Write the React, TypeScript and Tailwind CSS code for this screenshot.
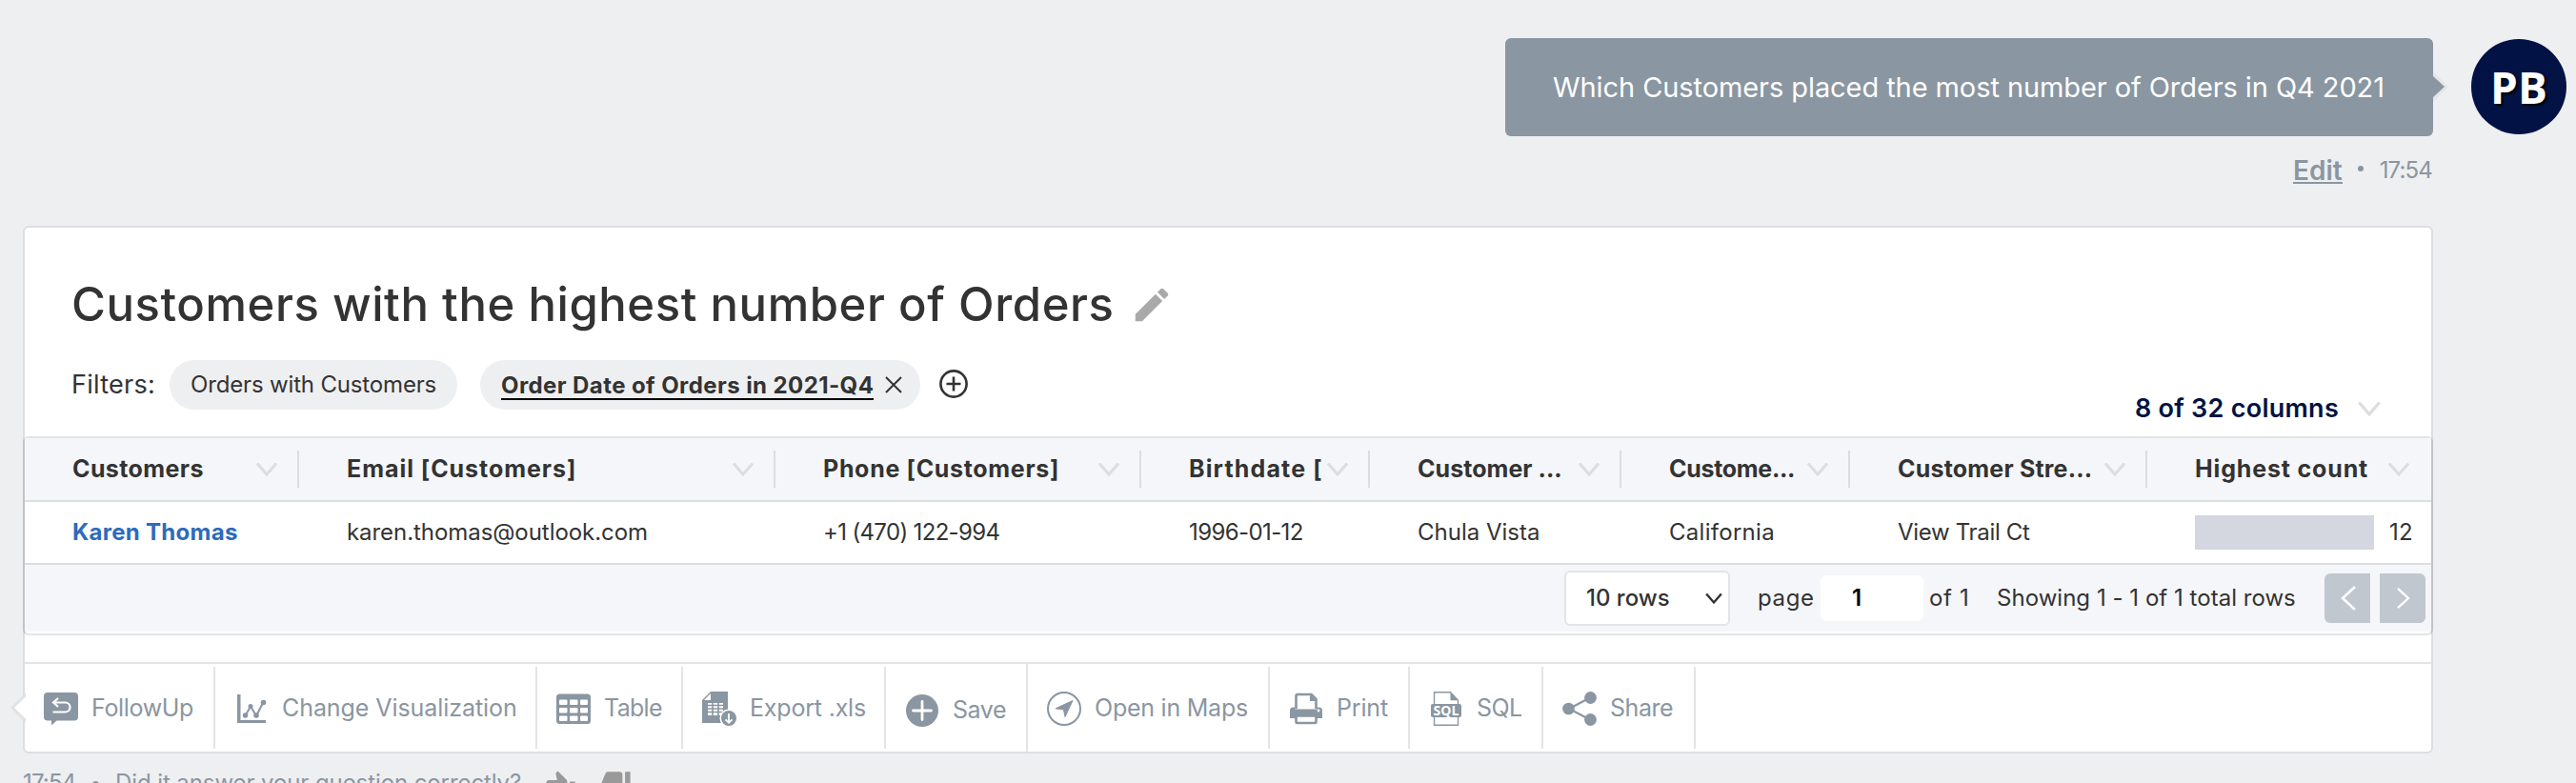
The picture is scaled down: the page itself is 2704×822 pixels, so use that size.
import React from 'react'
import { MdEdit, MdThumbDown, MdThumbUp } from 'react-icons/md'

type Column = {
    label: string;
    value: string;
    width: string;
    tracking: string;
    valueTracking: string;
};

const columns: Column[] = [
    { label: 'Customers', value: 'Karen Thomas', width: 'w-[288px]', tracking: 'tracking-[0.4px]', valueTracking: 'tracking-[0.29px]' },
    { label: 'Email [Customers]', value: 'karen.thomas@outlook.com', width: 'w-[500px]', tracking: 'tracking-[0.96px]', valueTracking: 'tracking-[-0.06px]' },
    { label: 'Phone [Customers]', value: '+1 (470) 122-994', width: 'w-[384px]', tracking: 'tracking-[0.68px]', valueTracking: 'tracking-[-0.66px]' },
    { label: 'Birthdate [', value: '1996-01-12', width: 'w-[240px]', tracking: 'tracking-[1.15px]', valueTracking: 'tracking-[-0.6px]' },
    { label: 'Customer ...', value: 'Chula Vista', width: 'w-[264px]', tracking: 'tracking-[0.05px]', valueTracking: 'tracking-[0px]' },
    { label: 'Custome...', value: 'California', width: 'w-[240px]', tracking: 'tracking-[-0.3px]', valueTracking: 'tracking-[0.28px]' },
    { label: 'Customer Stre...', value: 'View Trail Ct', width: 'w-[312px]', tracking: 'tracking-[0.2px]', valueTracking: 'tracking-[-0.32px]' },
    { label: 'Highest count', value: '12', width: 'w-[298px]', tracking: 'tracking-[0.84px]', valueTracking: 'tracking-[0.24px]' },
]

const Chevron = ({ className }: { className: string }) => (
    <svg viewBox="0 0 22 14" fill="none" stroke="currentColor" className={className}>
        <path d="M1 0.5 L11 12 L21 0.5" strokeWidth="3" />
    </svg>
)

const FollowUpIcon = () => (
    <svg viewBox="0 0 36 36" className="size-9">
        <path d="M4 1h28a4 4 0 0 1 4 4v21.500a4 4 0 0 1-4 4H13.500L8 35.500v-5H4a4 4 0 0 1-4-4V5a4 4 0 0 1 4-4z" fill="currentColor" />
        <path d="M15 7l-5 4.500 5 4.500M10.500 11.500H22.500a5 5 0 0 1 0 10H9.500" fill="none" stroke="white" strokeWidth="2.200" />
    </svg>
)

const ChartIcon = () => (
    <svg viewBox="0 0 36 36" className="size-9" fill="currentColor">
        <path d="M3 3h3.500v27H33v3H3z" />
        <path d="M11.500 25.500L17 15.500l6 10L30.500 11" fill="none" stroke="currentColor" strokeWidth="2" />
        <circle cx="11.500" cy="25" r="2.800" />
        <circle cx="17" cy="15.500" r="2.500" />
        <circle cx="23" cy="25" r="2.800" />
        <circle cx="30.500" cy="11.500" r="2.800" />
    </svg>
)

const TableIcon = () => (
    <svg viewBox="0 0 36 36" className="size-9">
        <rect x="0" y="2.500" width="36" height="31.500" rx="3.500" fill="currentColor" />
        <g fill="white">
            <rect x="3" y="8.500" width="8.500" height="5.500" rx="1" />
            <rect x="14" y="8.500" width="8.500" height="5.500" rx="1" />
            <rect x="25" y="8.500" width="8" height="5.500" rx="1" />
            <rect x="3" y="17" width="8.500" height="5.500" rx="1" />
            <rect x="14" y="17" width="8.500" height="5.500" rx="1" />
            <rect x="25" y="17" width="8" height="5.500" rx="1" />
            <rect x="3" y="25.500" width="8.500" height="5.500" rx="1" />
            <rect x="14" y="25.500" width="8.500" height="5.500" rx="1" />
            <rect x="25" y="25.500" width="8" height="5.500" rx="1" />
        </g>
    </svg>
)

const ExportIcon = () => (
    <svg viewBox="0 0 36 36" className="size-9">
        <path d="M9 0h18v33H0V9z" fill="currentColor" />
        <path d="M9 2v7H2z" fill="white" />
        <path d="M6 12h16v13H6z" fill="white" />
        <path d="M6 14.500h16M6 18h16M6 21.500h16M11 12v13M17 12v13" stroke="currentColor" strokeWidth="1.600" />
        <circle cx="28" cy="28" r="9.500" fill="white" />
        <circle cx="28" cy="28" r="8" fill="currentColor" />
        <path d="M28 23v9.500M24.500 29.300l3.500 3.500 3.500-3.500" fill="none" stroke="white" strokeWidth="1.800" />
    </svg>
)

const SaveIcon = () => (
    <svg viewBox="0 0 36 36" className="size-9">
        <circle cx="18" cy="18" r="17" fill="currentColor" />
        <path d="M18 8.500v19M8.500 18h19" stroke="white" strokeWidth="2.800" strokeLinecap="round" />
    </svg>
)

const MapsIcon = () => (
    <svg viewBox="0 0 36 36" className="size-9">
        <circle cx="18" cy="18" r="17" fill="none" stroke="currentColor" strokeWidth="2" />
        <path d="M27 9.500L19 26.500l-1.500-7.500L9 17.800z" fill="currentColor" stroke="currentColor" strokeLinejoin="round" />
    </svg>
)

const PrintIcon = () => (
    <svg viewBox="0 0 36 36" className="size-9">
        <path d="M7.500 18V4.500a1.500 1.500 0 0 1 1.500-1.500h14.500l5 5V18" fill="none" stroke="currentColor" strokeWidth="2.600" />
        <path d="M22 3v7h7z" fill="currentColor" />
        <path d="M1 20a3.500 3.500 0 0 1 3.500-3.500h2V18.500h23v-2h2A3.500 3.500 0 0 1 35 20v8H1z" fill="currentColor" />
        <circle cx="31" cy="20" r="1.400" fill="white" />
        <rect x="7.500" y="25.500" width="21" height="7.500" rx="1" fill="white" stroke="currentColor" strokeWidth="2.600" />
    </svg>
)

const SqlIcon = () => (
    <svg viewBox="0 0 36 36" className="size-9">
        <path d="M5.500 0.700h17l8 8.500v26h-25z" fill="white" stroke="currentColor" strokeWidth="1.400" />
        <path d="M22.500 0.700v8.500h8z" fill="currentColor" />
        <rect x="2" y="13" width="32" height="14" rx="2" fill="currentColor" />
        <text x="18" y="25" textAnchor="middle" fontSize="14" fontWeight="700" letterSpacing="0" fill="white" fontFamily="Open Sans, sans-serif">SQL</text>
    </svg>
)

const ShareIcon = () => (
    <svg viewBox="0 0 36 36" className="size-9" fill="currentColor">
        <path d="M29 6.500L7 18l22 11.500" fill="none" stroke="currentColor" strokeWidth="2.200" />
        <circle cx="29.500" cy="6.500" r="6.400" />
        <circle cx="6.500" cy="18" r="6.300" />
        <circle cx="29.500" cy="29.500" r="6.400" />
    </svg>
)

const actions = [
    { label: 'FollowUp', Icon: FollowUpIcon, style: 'w-[200px] my-[3px] pt-0.5 tracking-[-0.35px]' },
    { label: 'Change Visualization', Icon: ChartIcon, style: 'w-[338px] my-[3px] pt-0.5 tracking-[-0.07px]' },
    { label: 'Table', Icon: TableIcon, style: 'w-[153px] my-[3px] pt-0.5 tracking-[-0.68px]' },
    { label: 'Export .xls', Icon: ExportIcon, style: 'w-[213px] my-[3px] pt-0.5 tracking-[-0.19px]' },
    { label: 'Save', Icon: SaveIcon, style: 'w-[149px] pt-1.5 tracking-[-0.42px]' },
    { label: 'Open in Maps', Icon: MapsIcon, style: 'w-[254px] my-[3px] pt-0.5 tracking-[-0.24px]' },
    { label: 'Print', Icon: PrintIcon, style: 'w-[147px] my-[3px] pt-0.5 tracking-[-0.15px]' },
    { label: 'SQL', Icon: SqlIcon, style: 'w-[140px] my-[3px] pt-0.5 tracking-[-0.58px]' },
    { label: 'Share', Icon: ShareIcon, style: 'w-[160px] my-[3px] pt-0.5 tracking-[-0.46px]' },
]

function Question() {
    return (
        <div className="flex justify-end gap-10 pr-2.5">
            <div>
                <div className="relative flex h-[103px] w-[974px] items-center rounded-md bg-[#8a96a1] pl-[50px] text-[29px] tracking-[-0.08px] text-white">
                    Which Customers placed the most number of Orders in Q4 2021
                    <svg viewBox="0 0 17 32" className="absolute top-[35px] left-full h-8 w-[17px]">
                        <path d="M0 0L16 16L0 32z" fill="#e3e5e7" />
                        <path d="M0 5L12 16L0 27z" fill="#8a96a1" />
                    </svg>
                </div>
                <div className="mt-[22px] flex h-7 items-center justify-end text-[#8a96a1]">
                    <a className="h-7 border-b-2 border-[#8a96a1] text-[28px] leading-7 font-semibold">Edit</a>
                    <span className="mr-[17px] ml-4 mb-1 size-1.5 rounded-full bg-[#8a96a1]" />
                    <span className="mr-px text-2xl leading-7 tracking-[-0.85px]">17:54</span>
                </div>
            </div>
            <div className="mt-px flex size-[100px] items-center justify-center rounded-full bg-[#021244] font-['Open_Sans'] text-[46px] leading-none font-bold text-white [text-shadow:2px_2px_2px_#000]">
                PB
            </div>
        </div>
    )
}

function ResultHeader() {
    return (
        <div className="flex h-[219px] items-end justify-between pr-[53px] pl-[49px]">
            <div className="pb-7">
                <div className="flex h-[61px] items-center gap-[17px]">
                    <h1 className="text-[49px] font-medium tracking-[0.57px]">Customers with the highest number of Orders</h1>
                    <MdEdit className="size-[46px] text-[#a9a9a9]" />
                </div>
                <div className="mt-7 flex h-[52px] items-center text-2xl">
                    <span className="w-[103px] text-[27px] tracking-[0.27px]">Filters:</span>
                    <span className="flex h-full w-[302px] items-center rounded-full bg-[#eeeff1] pl-[22px] tracking-[-0.16px]">Orders with Customers</span>
                    <span className="ml-6 flex h-full w-[462px] items-center rounded-full bg-[#eeeff1] pl-[22px]">
                        <span className="h-[31px] w-[391px] border-b-2 border-black leading-8 font-bold tracking-[0.42px] whitespace-nowrap">Order Date of Orders in 2021-Q4</span>
                        <svg viewBox="0 0 18 18" className="ml-3 h-[18px] w-[18px]" stroke="currentColor" strokeWidth="2">
                            <path d="M1 1L17 17M17 1L1 17" />
                        </svg>
                    </span>
                    <svg viewBox="0 0 30 30" className="mb-0.5 ml-5 size-[30px]" fill="none" stroke="currentColor" strokeWidth="2.6">
                        <circle cx="15" cy="15" r="13.600" />
                        <path d="M15 7.500v15M7.500 15h15" />
                    </svg>
                </div>
            </div>
            <div className="mb-[9px] flex h-10 items-center gap-5">
                <span className="text-[27px] font-semibold tracking-[0.27px] text-[#021244]">8 of 32 columns</span>
                <Chevron className="h-[15px] w-6 text-[#dcdddf]" />
            </div>
        </div>
    )
}

function ResultTable() {
    return (
        <div className="-mx-0.5 h-[209px] rounded-md border-2 border-[#e3e4e6] border-x-[#c0c4c8]">
            <div className="flex h-[67px] items-center border-b-2 border-[#dbdfe1] bg-[#f5f6fa] text-[25px] font-bold">
                {columns.map((col, i) => (
                    <div key={col.label} className={`flex h-[39px] items-center pl-[50px] ${col.width}`}>
                        <span className={`w-0 grow whitespace-nowrap ${col.tracking}`}>{col.label}</span>
                        <Chevron className="mr-[21px] h-3.5 w-[22px] shrink-0 text-[#dcdddf]" />
                        <span className={`h-full w-0.5 ${i < columns.length - 1 ? 'bg-[#dcdddf]' : ''}`} />
                    </div>
                ))}
            </div>
            <div className="flex h-[66px] items-center border-b-2 border-[#dbdfe1] text-2xl">
                {columns.map((col, i) => (
                    <div key={col.label} className={`flex items-center pl-[50px] ${col.width}`}>
                        {i === columns.length - 1 && <span className="mr-4 h-9 w-[188px] bg-[#d4d7e0]" />}
                        <span className={`whitespace-nowrap ${col.valueTracking} ${i === 0 ? 'font-bold text-[#2d6bbb]' : ''}`}>{col.value}</span>
                    </div>
                ))}
            </div>
            <div className="flex h-[70px] items-center justify-end bg-[#f5f6fa] pr-1.5 text-2xl">
                <div className="flex h-[58px] w-[174px] items-center justify-between rounded-md border-2 border-[#e3e4e6] bg-white pr-[6px] pl-[21px] font-medium">
                    10 rows
                    <Chevron className="h-[11px] w-[18px]" />
                </div>
                <span className="ml-[29px] w-[66px] tracking-[0.63px]">page</span>
                <span className="flex h-12 w-[108px] items-center rounded-md bg-white pl-[33px] font-semibold text-black">1</span>
                <span className="ml-1.5 w-[71px] tracking-[0.66px]">of 1</span>
                <span className="w-[344px] tracking-[0.03px]">Showing 1 - 1 of 1 total rows</span>
                <button className="flex h-[52px] w-12 items-center justify-center rounded-l-md bg-[#c0c7cf] text-white">
                    <svg viewBox="0 0 16 26" className="ml-0.5 h-[26px] w-4" fill="none" stroke="currentColor" strokeWidth="2.5">
                        <path d="M15 1L2 13l13 12" />
                    </svg>
                </button>
                <button className="ml-2.5 flex h-[52px] w-12 items-center justify-center rounded-r-md bg-[#c0c7cf] text-white">
                    <svg viewBox="0 0 16 24" className="h-[22px] w-[15px]" fill="none" stroke="currentColor" strokeWidth="2.5">
                        <path d="M2 1l12 11L2 23" />
                    </svg>
                </button>
            </div>
        </div>
    )
}

export default function App() {
    return (
        <div className="h-[822px] w-[2704px] overflow-hidden bg-[#eeeff1] pt-10 font-['Inter',sans-serif] text-[#333333]">
            <Question />
            <div className="relative mt-11 ml-6 h-[554px] w-[2530px] rounded-md border-2 border-[#dcdee1] bg-white">
                <ResultHeader />
                <ResultTable />
                <div className="mt-7 flex h-[94px] border-t-2 border-[#e3e4e6] text-[25px] text-[#8a96a1]">
                    {actions.map(({ label, Icon, style }) => (
                        <div key={label} className={`flex items-center gap-3.5 border-r-2 border-[#e3e4e6] pl-5 whitespace-nowrap ${style}`}>
                            <Icon />
                            {label}
                        </div>
                    ))}
                </div>
                <svg viewBox="0 0 16 32" className="absolute top-[488px] -left-[15px] h-8 w-4">
                    <path d="M16 0L0 16L16 32z" fill="#e0e2e4" />
                    <path d="M16 4.500L4 16L16 27.500z" fill="white" />
                </svg>
            </div>
            <div className="mt-[17px] ml-6 flex h-7 items-center text-2xl leading-7 text-[#8a96a1]">
                <span className="w-[73px] tracking-[-0.85px]">17:54</span>
                <span className="mr-[17px] mt-0.5 size-[7px] rounded-full bg-[#8a96a1]" />
                <span className="w-[451px] tracking-[-0.09px]">Did it answer your question correctly?</span>
                <MdThumbUp className="mt-1 size-[33px] -scale-x-100 text-[#999999]" />
                <MdThumbDown className="ml-[25px] size-[33px] text-[#999999]" />
            </div>
        </div>
    )
}
